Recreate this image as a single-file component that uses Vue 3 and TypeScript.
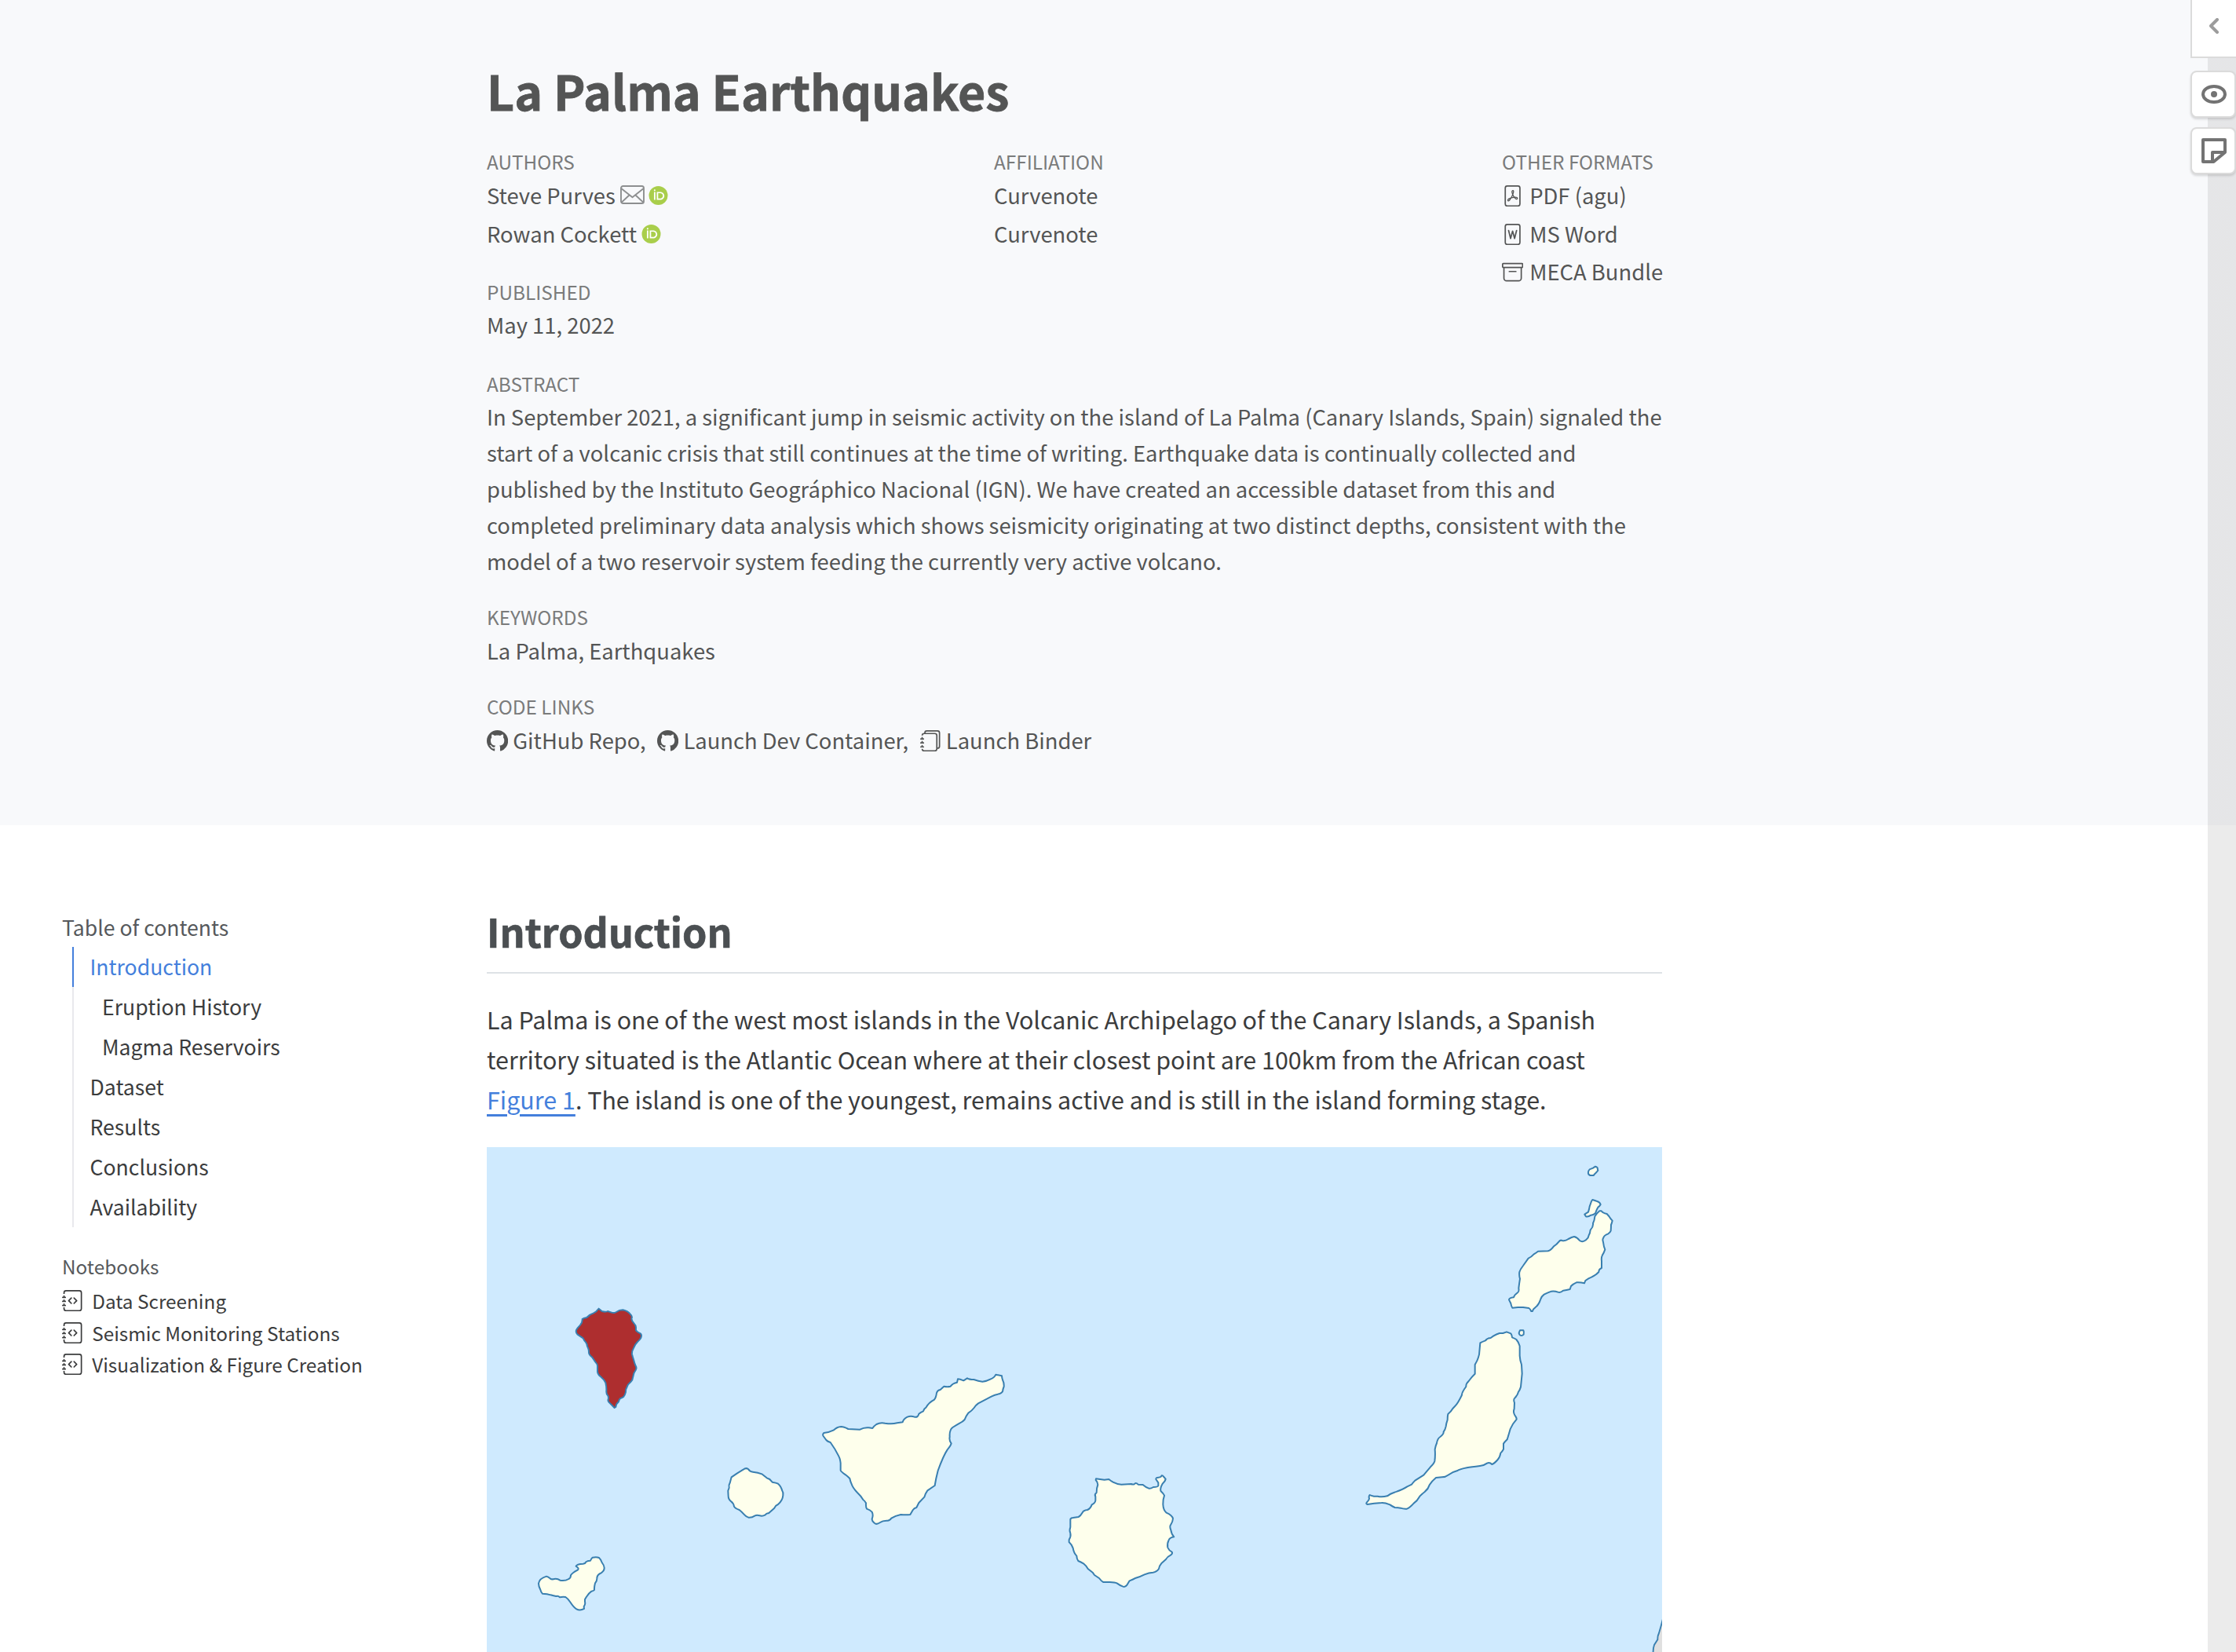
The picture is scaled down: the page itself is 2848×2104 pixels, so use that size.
<script setup lang="ts">
interface TocEntry { label: string; nested?: boolean; active?: boolean }

const sheet = 'M4 0a2 2 0 0 0-2 2v12a2 2 0 0 0 2 2h8a2 2 0 0 0 2-2V2a2 2 0 0 0-2-2zm0 1h8a1 1 0 0 1 1 1v12a1 1 0 0 1-1 1H4a1 1 0 0 1-1-1V2a1 1 0 0 1 1-1'
const icons: Record<string, string[]> = {
  pdf: [sheet, 'M4.603 12.087a.8.8 0 0 1-.438-.42c-.195-.388-.13-.776.08-1.102.198-.307.526-.568.897-.787a7.7 7.7 0 0 1 1.482-.645 20 20 0 0 0 1.062-2.227 7.3 7.3 0 0 1-.43-1.295c-.086-.4-.119-.796-.046-1.136.075-.354.274-.672.65-.823.192-.077.4-.12.602-.077a.7.7 0 0 1 .477.365c.088.164.12.356.127.538.007.187-.012.395-.047.614-.084.51-.27 1.134-.52 1.794a11 11 0 0 0 .98 1.686 5.8 5.8 0 0 1 1.334.05c.364.065.734.195.96.465.12.144.193.32.2.518.007.192-.047.382-.138.563a1.04 1.04 0 0 1-.354.416.86.86 0 0 1-.51.138c-.331-.014-.654-.196-.933-.417a5.7 5.7 0 0 1-.911-.95 11.6 11.6 0 0 0-1.997.406 11.3 11.3 0 0 1-1.021 1.51c-.29.35-.608.655-.926.787a.8.8 0 0 1-.58.029m1.379-1.901q-.25.115-.459.238c-.328.194-.541.383-.647.547-.094.145-.096.25-.04.361q.016.032.026.044l.035-.012c.137-.056.355-.235.635-.572a8 8 0 0 0 .45-.606m1.64-1.33a13 13 0 0 1 1.01-.193 12 12 0 0 1-.51-.858 21 21 0 0 1-.5 1.05zm2.446.45q.226.244.435.41c.24.19.407.253.498.256a.1.1 0 0 0 .07-.015.3.3 0 0 0 .094-.125.44.44 0 0 0 .059-.2.1.1 0 0 0-.026-.063c-.052-.062-.2-.152-.518-.209a4 4 0 0 0-.612-.053zM8.078 5.8a7 7 0 0 0 .2-.828q.046-.282.038-.465a.6.6 0 0 0-.032-.198.5.5 0 0 0-.145.04c-.087.035-.158.106-.196.283-.04.192-.03.469.046.822q.036.167.09.346z'],
  word: [sheet, 'M5.485 4.879a.5.5 0 0 0-.97.242l1.5 6a.5.5 0 0 0 .967.01L8 7.402l1.018 3.73a.5.5 0 0 0 .967-.01l1.5-6a.5.5 0 0 0-.97-.242l-1.036 4.144-.997-3.655a.5.5 0 0 0-.964 0l-.997 3.655z'],
  archive: ['M0 2a1 1 0 0 1 1-1h14a1 1 0 0 1 1 1v2a1 1 0 0 1-1 1v7.5a2.5 2.5 0 0 1-2.5 2.5h-9A2.5 2.5 0 0 1 1 12.5V5a1 1 0 0 1-1-1zm2 3v7.5A1.5 1.5 0 0 0 3.5 14h9a1.5 1.5 0 0 0 1.5-1.5V5zm13-3H1v2h14zM5 7.5a.5.5 0 0 1 .5-.5h5a.5.5 0 0 1 0 1h-5a.5.5 0 0 1-.5-.5'],
  github: ['M8 0C3.58 0 0 3.58 0 8c0 3.54 2.29 6.53 5.47 7.59.4.07.55-.17.55-.38 0-.19-.01-.82-.01-1.49-2.01.37-2.53-.49-2.69-.94-.09-.23-.48-.94-.82-1.13-.28-.15-.68-.52-.01-.53.63-.01 1.08.58 1.23.82.72 1.21 1.87.87 2.33.66.07-.52.28-.87.51-1.07-1.78-.2-3.64-.89-3.64-3.95 0-.87.31-1.59.82-2.15-.08-.2-.36-1.02.08-2.12 0 0 .67-.21 2.2.82.64-.18 1.32-.27 2-.27s1.36.09 2 .27c1.53-1.04 2.2-.82 2.2-.82.44 1.1.16 1.92.08 2.12.51.56.82 1.27.82 2.15 0 3.07-1.87 3.75-3.65 3.95.29.25.54.73.54 1.48 0 1.07-.01 1.93-.01 2.2 0 .21.15.46.55.38A8.01 8.01 0 0 0 16 8c0-4.42-3.58-8-8-8'],
  journals: ['M5 0h8a2 2 0 0 1 2 2v10a2 2 0 0 1-2 2 2 2 0 0 1-2 2H3a2 2 0 0 1-2-2h1a1 1 0 0 0 1 1h8a1 1 0 0 0 1-1V4a1 1 0 0 0-1-1H3a1 1 0 0 0-1 1H1a2 2 0 0 1 2-2h8a2 2 0 0 1 2 2v9a1 1 0 0 0 1-1V2a1 1 0 0 0-1-1H5a1 1 0 0 0-1 1H3a2 2 0 0 1 2-2', 'M1 6v-.5a.5.5 0 0 1 1 0V6h.5a.5.5 0 0 1 0 1h-2a.5.5 0 0 1 0-1zm0 3v-.5a.5.5 0 0 1 1 0V9h.5a.5.5 0 0 1 0 1h-2a.5.5 0 0 1 0-1zm0 2.5v.5H.5a.5.5 0 0 0 0 1h2a.5.5 0 0 0 0-1H2v-.5a.5.5 0 0 0-1 0'],
  journalCode: ['M8.646 5.646a.5.5 0 0 1 .708 0l2 2a.5.5 0 0 1 0 .708l-2 2a.5.5 0 0 1-.708-.708L10.293 8 8.646 6.354a.5.5 0 0 1 0-.708m-1.292 0a.5.5 0 0 0-.708 0l-2 2a.5.5 0 0 0 0 .708l2 2a.5.5 0 0 0 .708-.708L5.707 8l1.647-1.646a.5.5 0 0 0 0-.708', 'M3 0h10a2 2 0 0 1 2 2v12a2 2 0 0 1-2 2H3a2 2 0 0 1-2-2v-1h1v1a1 1 0 0 0 1 1h10a1 1 0 0 0 1-1V2a1 1 0 0 0-1-1H3a1 1 0 0 0-1 1v1H1V2a2 2 0 0 1 2-2', 'M1 5v-.5a.5.5 0 0 1 1 0V5h.5a.5.5 0 0 1 0 1h-2a.5.5 0 0 1 0-1zm0 3v-.5a.5.5 0 0 1 1 0V8h.5a.5.5 0 0 1 0 1h-2a.5.5 0 0 1 0-1zm0 3v-.5a.5.5 0 0 1 1 0v.5h.5a.5.5 0 0 1 0 1h-2a.5.5 0 0 1 0-1z'],
}

const formats = [
  { icon: 'pdf', label: 'PDF (agu)' },
  { icon: 'word', label: 'MS Word' },
  { icon: 'archive', label: 'MECA Bundle' },
]
const codeLinks = [
  { icon: 'github', label: 'GitHub Repo,' },
  { icon: 'github', label: 'Launch Dev Container,' },
  { icon: 'journals', label: 'Launch Binder' },
]
const abstract = [
  'In September 2021, a significant jump in seismic activity on the island of La Palma (Canary Islands, Spain) signaled the',
  'start of a volcanic crisis that still continues at the time of writing. Earthquake data is continually collected and',
  'published by the Instituto Geográphico Nacional (IGN). We have created an accessible dataset from this and',
  'completed preliminary data analysis which shows seismicity originating at two distinct depths, consistent with the',
  'model of a two reservoir system feeding the currently very active volcano.',
]
const toc: TocEntry[] = [
  { label: 'Introduction', active: true },
  { label: 'Eruption History', nested: true },
  { label: 'Magma Reservoirs', nested: true },
  { label: 'Dataset' },
  { label: 'Results' },
  { label: 'Conclusions' },
  { label: 'Availability' },
]
const notebooks = ['Data Screening', 'Seismic Monitoring Stations', 'Visualization & Figure Creation']
</script>

<template>
  <div class="page">
    <header class="banner">
      <h1>La Palma Earthquakes</h1>
      <div class="meta">
        <div class="col">
          <div class="label">AUTHORS</div>
          <div class="line author">
            <span>Steve Purves</span>
            <svg class="mail" viewBox="0 0 31 24" fill="none" stroke="#8d8f90" stroke-width="1.9" stroke-linejoin="round">
              <rect x="1" y="1" width="29" height="22" rx="2.6" />
              <path d="M1.6 4.200 15.500 15.200 29.400 4.200M1.600 21.800 11.800 12.300M29.400 21.800 19.200 12.300" />
            </svg>
            <svg class="orcid" viewBox="0 0 256 256"><circle cx="128" cy="128" r="128" fill="#a9ce4b" /><g fill="#fff"><path d="M69 79h19v107H69zM107 79h44c40 0 59 28 59 54 0 28-24 54-59 54h-44zm19 90h23c33 0 41-24 41-36 0-21-14-37-42-37h-22z" /><circle cx="78.500" cy="57" r="11" /></g></svg>
          </div>
          <div class="line author">
            <span>Rowan Cockett</span>
            <svg class="orcid" viewBox="0 0 256 256"><circle cx="128" cy="128" r="128" fill="#a9ce4b" /><g fill="#fff"><path d="M69 79h19v107H69zM107 79h44c40 0 59 28 59 54 0 28-24 54-59 54h-44zm19 90h23c33 0 41-24 41-36 0-21-14-37-42-37h-22z" /><circle cx="78.500" cy="57" r="11" /></g></svg>
          </div>
        </div>
        <div class="col">
          <div class="label">AFFILIATION</div>
          <div class="line">Curvenote</div>
          <div class="line">Curvenote</div>
        </div>
        <div class="col formats">
          <div class="label">OTHER FORMATS</div>
          <div v-for="f in formats" :key="f.label" class="line format">
            <svg class="icon" viewBox="0 0 16 16" fill="currentColor"><path v-for="(d, i) in icons[f.icon]" :key="i" :d="d" /></svg>
            <span>{{ f.label }}</span>
          </div>
        </div>
      </div>
      <section class="published">
        <div class="label">PUBLISHED</div>
        <div class="line">May 11, 2022</div>
      </section>
      <section class="abstract">
        <div class="label">ABSTRACT</div>
        <p><template v-for="(t, i) in abstract" :key="i">{{ t }}<br></template></p>
      </section>
      <section class="keywords">
        <div class="label">KEYWORDS</div>
        <div class="line">La Palma, Earthquakes</div>
      </section>
      <section class="links">
        <div class="label">CODE LINKS</div>
        <div class="line link-row">
          <span v-for="l in codeLinks" :key="l.label" class="link">
            <svg class="icon" viewBox="0 0 16 16" fill="currentColor"><path v-for="(d, i) in icons[l.icon]" :key="i" :d="d" /></svg>
            <span>{{ l.label }}</span>
          </span>
        </div>
      </section>
    </header>

    <div class="body">
      <nav class="sidebar">
        <div class="toc-title">Table of contents</div>
        <ul class="toc">
          <li v-for="t in toc" :key="t.label" :class="{ nested: t.nested, active: t.active }">{{ t.label }}</li>
        </ul>
        <div class="nb-title">Notebooks</div>
        <div v-for="n in notebooks" :key="n" class="notebook">
          <svg class="icon" viewBox="0 0 16 16" fill="currentColor"><path v-for="(d, i) in icons.journalCode" :key="i" :d="d" /></svg>
          <span>{{ n }}</span>
        </div>
      </nav>
      <main class="article">
        <h2>Introduction</h2>
        <p>La Palma is one of the west most islands in the Volcanic Archipelago of the Canary Islands, a Spanish<br>territory situated is the Atlantic Ocean where at their closest point are 100km from the African coast<br><a>Figure 1</a>. The island is one of the youngest, remains active and is still in the island forming stage.</p>
        <svg class="map" viewBox="620 1461 1497 643">
          <rect x="620" y="1461" width="1497" height="643" fill="#cfeafe" />
          <g fill="#feffec" stroke="#397fb0" stroke-width="6" stroke-linejoin="round">
            <g transform="translate(660 1630) scale(.33333)">
              <path fill="#ae2e2f" d="M308 110 320 120Q335 124 342 120L357 125Q366 128 375 123Q386 115 400 115Q420 119 429 132Q438 140 433 148Q434 158 443 167Q451 175 450 184V193Q455 200 467 205Q473 210 470 219Q468 226 456 237Q445 248 441 261Q434 272 435 284Q438 296 442 308Q445 320 449 329Q454 336 449 345Q440 357 439 370Q438 382 430 390Q418 400 416 409Q411 416 411 429Q407 445 400 449L389 454Q384 461 384 466Q374 474 373 486L368 489 346 467Q342 462 344 456Q346 448 343 443Q336 436 337 426Q338 410 334 393Q329 382 315 370Q303 360 303 350V330Q303 322 295 314Q288 303 282 295Q268 286 270 272Q269 264 264 254Q264 246 258 238Q252 232 248 223Q236 215 227 209Q219 202 222 192Q226 184 237 173Q246 163 245 150Q249 146 262 144Q272 132 288 127Q300 122 303 115Z" />
              <path d="M815 754Q835 740 860 725Q870 717 879 723Q885 733 897 734Q917 736 931 742L950 757 961 762 971 773Q986 775 993 779Q1004 788 1009 806Q1014 812 1012 824Q1010 844 993 858Q983 862 979 872L957 892Q950 890 944 898Q934 904 923 901Q912 898 905 901Q893 909 880 908Q871 905 865 898Q853 885 845 879Q829 874 825 866Q823 853 814 847Q803 839 803 826L802 806 806 795Q804 783 809 776Z" />
              <path d="M108 1133Q115 1135 122 1141Q129 1146 138 1143Q150 1141 160 1148Q178 1152 193 1143Q201 1140 201 1129Q206 1120 227 1109Q233 1104 227 1099L221 1094Q224 1086 248 1085Q257 1084 260 1077 Q267 1073 276 1073Q280 1065 284 1061Q300 1058 309 1062Q315 1067 320 1080Q330 1093 329 1102Q329 1112 317 1120Q302 1126 301 1139Q302 1149 294 1159Q290 1175 291 1185Q288 1189 280 1190Q268 1198 255 1221V1231Q258 1238 251 1249L252 1257Q236 1266 223 1258Q213 1253 198 1230Q189 1217 181 1212Q170 1210 159 1213Q153 1206 145 1209Q136 1207 124 1204Q112 1200 93 1199Q87 1194 85 1184Q78 1171 78 1160Q81 1141 108 1133Z" />
            </g>
            <path transform="translate(900 1720) scale(.33333)" d="M448 315Q470 312 486 304Q498 292 514 291Q524 291 541 300L586 302Q602 293 620 295L634 297Q640 288 649 282Q664 274 682 278Q708 282 728 277L749 274Q752 262 767 254Q780 249 795 254Q808 257 811 242Q818 236 828 232Q831 222 839 217Q849 199 870 188Q877 180 879 162Q882 152 893 150L907 137Q920 140 932 137Q940 125 957 122L960 109Q967 109 982 115Q991 110 996 106Q1003 111 1021 111Q1039 117 1054 119Q1072 117 1084 110Q1100 104 1105 92L1128 97Q1128 104 1132 115Q1137 124 1136 138Q1132 147 1131 157Q1126 163 1118 166Q1101 169 1088 176L1038 202Q1028 209 1022 219Q1013 231 1000 239Q990 252 986 264Q978 273 968 277Q952 286 940 294Q927 304 929 330Q926 344 935 355Q933 364 920 379Q905 401 884 459Q876 490 872 516L844 535Q836 546 832 560L811 582 802 600Q793 602 788 610L778 627Q762 629 742 627Q721 631 706 641Q700 650 691 650Q673 649 663 657Q649 667 641 659Q631 651 632 644Q638 628 632 617Q624 609 612 605Q608 600 609 583Q604 574 598 570Q589 555 576 543Q558 525 553 508Q549 499 547 489Q540 482 531 475Q512 461 512 458V430Q510 412 505 404Q492 377 473 351 Q462 348 457 342L446 327Q442 321 448 315Z" />
            <path transform="translate(1320 1850) scale(.33333)" d="M228 100Q243 102 260 104L277 102Q285 108 293 113Q310 122 325 122L362 120Q370 124 376 119Q381 114 389 122L407 123Q417 132 430 137Q437 138 447 132Q464 131 466 127V115L457 102Q456 95 467 95Q477 95 479 88 Q483 87 487 93L494 101Q493 109 482 119Q471 138 476 148Q486 157 489 164Q487 172 485 180L484 198Q485 220 497 230Q519 240 522 252Q521 265 514 275Q508 282 514 296Q516 312 526 322Q510 325 506 334Q499 348 502 363Q506 373 518 380Q522 386 513 392Q502 397 495 408L479 422Q469 434 468 444Q460 456 446 458Q430 459 413 466Q398 474 380 479Q370 485 356 490L347 505Q340 515 331 512Q321 509 309 500Q300 495 281 495H256Q249 492 240 480L222 468 215 458 197 444Q190 432 180 424Q170 418 160 414Q154 405 154 395Q143 384 140 365Q136 352 125 342V333Q133 320 130 308Q125 298 130 285V255Q131 250 140 249L161 246Q169 242 177 228Q180 221 195 219Q207 214 212 199Q225 193 226 183V168Q221 160 230 153 Q230 135 235 123Q235 113 227 105Z" />
            <g transform="translate(1880 1460) scale(.33333)">
              <path d="M447 83 456 77Q464 79 464 83L466 92Q460 100 455 104L449 111H436Q428 107 429 102Q428 94 434 88Z" />
              <path d="M445 204Q451 206 463 210Q473 213 476 222Q473 228 466 233Q460 243 456 256Q448 263 439 263Q428 271 420 268L415 260Q421 256 429 251Q433 238 434 230Q438 219 441 210Z" />
              <path d="M479 247Q484 255 500 258L508 267Q514 277 521 284Q519 293 516 300Q516 313 515 323Q512 330 505 334Q488 341 487 349Q482 355 486 366Q488 384 493 394Q489 406 483 415Q478 425 480 438V465Q469 469 469 480Q460 490 441 500Q430 504 418 513L414 523Q399 519 384 520Q370 526 363 534L359 546Q345 550 333 551Q323 561 313 557Q300 552 288 554Q275 559 260 566Q249 574 246 586Q240 605 226 616Q217 622 216 630H211Q207 621 202 618L180 615H160L139 617Q134 609 133 600L126 586Q128 578 144 577Q147 567 160 558Q165 555 163 542Q165 525 168 506Q164 492 166 480Q169 470 180 456L200 428 Q211 423 221 412Q231 406 237 401L275 400Q286 397 297 382Q309 375 316 365Q321 356 329 360Q341 363 353 354Q366 347 375 345Q386 347 396 360Q407 368 420 358Q430 350 431 340Q436 332 437 320Q449 307 447 294Q453 282 454 268Q461 256 472 247Z" />
            </g>
            <g transform="translate(1700 1660) scale(.33333)">
              <path d="M708 103H721Q724 108 722 119Q716 125 709 122Q702 115 705 110Z" />
              <path d="M556 151Q562 147 576 142Q582 133 596 132L606 125Q618 118 630 114H643L657 109 673 115Q678 122 678 130Q689 134 694 138Q703 148 707 163V200Q708 218 714 234L716 268 711 319Q707 332 702 338Q700 350 686 364Q683 370 687 380L686 403Q681 415 688 427Q696 437 695 443Q678 462 671 480Q663 508 659 520Q649 530 645 536V557Q640 566 634 572Q631 589 623 597Q610 612 601 615Q592 606 582 611Q570 620 555 621Q521 625 505 628Q479 633 467 640Q447 645 433 656Q423 664 410 664L387 666Q370 680 362 694Q357 710 345 719Q330 731 325 737Q315 755 302 764Q288 780 276 785Q262 786 252 782Q240 780 230 780Q219 775 211 769Q191 761 179 762Q150 763 125 768Q118 766 123 760Q131 753 132 746Q129 737 134 732Q139 735 150 737H164Q180 741 201 736Q213 727 226 723Q260 711 277 700L294 692Q300 684 307 677L340 656Q353 640 366 625Q380 611 382 603Q385 580 383 558Q385 545 390 534Q393 516 403 510Q417 500 416 491Q423 481 425 470Q426 459 431 445Q431 431 433 423Q445 413 451 402Q470 383 475 371Q482 359 486 350Q485 341 502 318Q501 307 512 297Q523 281 536 269L536 234Q546 217 549 206Q553 197 553 184Z" />
            </g>
          </g>
          <path d="M2118 2062Q2115.500 2072 2113 2080Q2111 2084 2111.400 2088L2107 2095Q2105.500 2099 2105.600 2105H2118Z" fill="#e0e0e0" stroke="#397fb0" stroke-width="1.900" />
        </svg>
      </main>
    </div>

    <aside class="annotator">
      <div class="toggle"><svg viewBox="0 0 12 20" fill="none" stroke="#9c9c9c" stroke-width="4" stroke-linecap="round" stroke-linejoin="round"><path d="M10 2 2 10 10 18" /></svg></div>
      <div class="tool"><svg viewBox="0 0 32 32" fill="none" stroke="#737373" stroke-width="4"><ellipse cx="16" cy="16" rx="14" ry="10" /><circle cx="16" cy="16" r="4" fill="#737373" stroke="none" /></svg></div>
      <div class="tool"><svg viewBox="0 0 32 32" fill="none" stroke="#737373" stroke-width="4" stroke-linejoin="round"><path d="M2 2H30V18L15.500 30H2ZM14 30V18H30" /></svg></div>
    </aside>
  </div>
</template>

<style>
body { margin: 0; background: #fff; }
</style>

<style scoped>
.page { position: relative; width: 2848px; height: 2104px; overflow: hidden; font-family: "Noto Sans CJK SC", "Noto Sans", sans-serif; color: #343a40; white-space: nowrap; font-kerning: normal; }
h1, h2, p, ul { margin: 0; padding: 0; }
.banner { box-sizing: border-box; height: 1051px; padding: 75px 731px 0 620px; background: #f8f9fb; color: #545555; }
h1 { font-size: 60.850px; line-height: 80px; font-weight: 700; -webkit-text-stroke: .8px currentColor; }
.meta { display: grid; grid-template-columns: 646px 647px 1fr; height: 166px; margin-top: 31px; }
.label { height: 39px; font-size: 24.340px; line-height: 40px; color: #7a7b7b; }
.line { height: 46px; font-size: 27.400px; line-height: 46px; }
.line + .line { margin-top: 2.500px; }
.author { display: flex; }
.mail { width: 31px; height: 24px; margin: 11px 5px 0 6px; }
.orcid { width: 25px; height: 24px; margin-top: 12px; }
span + .orcid { margin-left: 6px; }
.icon { width: 27.200px; height: 27.200px; flex: none; }
.format { display: flex; }
.format .icon { margin: 11px 8px 0 0; }
.published { height: 117px; }
.published .line { margin-top: -1px; }
.abstract { height: 297px; }
.abstract p { font-size: 27.400px; line-height: 45.900px; }
.keywords { height: 114px; }
.link-row { display: flex; }
.link { display: flex; }
.link + .link { margin-left: 14.500px; }
.link .icon { margin: 11px 6px 0 0; }
.body { display: flex; height: 1053px; }
.sidebar { width: 541px; padding: 105px 0 0 79px; }
.toc-title { height: 50px; font-size: 26.620px; line-height: 50px; color: #56595c; }
.toc { list-style: none; margin-left: 13px; }
.toc li { height: 51px; font-size: 26.620px; line-height: 49px; padding-left: 20.500px; border-left: 2px solid #e9e9ed; color: #3b3c3d; }
.toc li.nested { padding-left: 36px; }
.toc li.active { color: #447fdc; border-left-color: #447fdc; }
.nb-title { margin-top: 30px; height: 44px; font-size: 24.340px; line-height: 40px; color: #56595c; }
.notebook { display: flex; height: 40.500px; font-size: 24.340px; line-height: 40px; color: #3b3c3d; }
.notebook .icon { margin: 6px 11px 0 0; }
.article { width: 1497px; padding-top: 105px; }
h2 { height: 82px; border-bottom: 2px solid #dee2e6; font-size: 50.200px; line-height: 59px; font-weight: 700; color: #4b4f52; -webkit-text-stroke: .7px currentColor; }
.article p { margin-top: 33px; height: 188px; font-size: 30.440px; line-height: 51px; color: #3b3c3d; }
.article a { color: #447fdc; text-decoration: underline; text-decoration-thickness: 3px; text-underline-offset: 6px; }
.map { display: block; width: 1497px; height: 643px; }
.annotator { position: absolute; top: 0; right: 0; width: 58px; height: 2104px; background: linear-gradient(to right, transparent 22px, rgba(0, 0, 0, .08) 22px); }
.toggle { box-sizing: border-box; height: 74px; border: solid #dbdbdb; border-width: 0 0 2px 2px; background: #fff; padding: 23px 0 0 22px; }
.toggle svg { display: block; width: 12px; height: 20px; }
.tool { box-sizing: border-box; height: 60px; margin-top: 16px; padding: 12px; border: 2px solid #dbdbdb; border-radius: 8px; background: #fff; box-shadow: 0 2px 3px rgba(0, 0, 0, .14); }
.tool + .tool { margin-top: 12px; }
.tool svg { display: block; width: 32px; height: 32px; }
</style>
